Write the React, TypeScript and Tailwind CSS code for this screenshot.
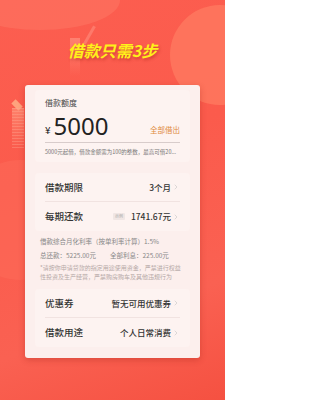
import { ChevronRight } from 'lucide-react'

const font = { fontFamily: '"Noto Sans CJK SC", "Noto Sans", sans-serif' }

function Row({ label, value, tag, last }: { label: string; value: string; tag?: string; last?: boolean }) {
  return (
    <div className={`mx-[10px] flex h-[29px] items-center ${last ? '' : 'border-b border-[#f1e3e1]'}`}>
      <span className="text-[9.5px] font-medium text-[#333]">{label}</span>
      <div className="ml-auto flex items-center">
        {tag && <span className="mr-[6px] rounded-[1px] bg-[#f0e6e4] px-[2px] text-[4px] leading-[7px] text-[#aaa]">{tag}</span>}
        <span className="text-[8.5px] font-medium text-[#333]">{value}</span>
        <ChevronRight className="ml-[1px] size-[8px] text-[#bbb]" strokeWidth={1.5} />
      </div>
    </div>
  )
}

export default function App() {
  return (
    <div style={font} className="relative h-[400px] w-[225px] overflow-hidden bg-[linear-gradient(160deg,#fc5e50_0%,#fb5b4c_40%,#fa6152_75%,#f55141_100%)]">
      {/* background decoration */}
      <div className="absolute -left-[40px] -top-[30px] h-[60px] w-[160px] rounded-[50%] bg-[#fd7463] opacity-60" />
      <div className="absolute -right-[45px] top-[5px] h-[100px] w-[100px] rounded-full bg-[#ff7d63] opacity-70" />
      <div className="absolute left-[-40px] top-[160px] h-[120px] w-[120px] rounded-full bg-[#fd6b5a] opacity-50" />
      <div className="absolute left-[70px] top-[38px] h-[38px] w-[10px] bg-[linear-gradient(180deg,#ff8a7a,#fc6a5b00)] opacity-80" />
      <div className="absolute left-[88px] top-[25px] h-[20px] w-[3px] rotate-[30deg] bg-[#ff9585] opacity-50" />
      <div className="absolute left-[12px] top-[102px] h-[6px] w-[10px] rotate-45 bg-[#ffb48a] opacity-80" />
      <div className="absolute left-[12px] top-[108px] h-[40px] w-[12px] bg-[repeating-linear-gradient(0deg,#ffb09a55_0px,#ffb09a55_1px,transparent_1px,transparent_3px),linear-gradient(180deg,#ff9a7e99,#fc6a5b00)]" />

      {/* title */}
      <div className="relative flex justify-center pt-[40px]">
        <span className="text-[16px] font-bold italic leading-[20px] text-[#fff01a] [text-shadow:1px_2px_3px_rgba(160,30,20,0.45)]">借款只需3步</span>
      </div>

      {/* card */}
      <div className="relative mx-[25px] mt-[25px] rounded-[3px] bg-[#fcefed] pb-[11px] pt-[5px] shadow-[0_2px_6px_rgba(150,30,20,0.3)]">
        <div className="mx-[10px] rounded-[4px] bg-[#fdf3f1] px-[10px] pb-[5px] pt-[7px]">
          <div className="text-[8px] leading-[11px] text-[#444]">借款额度</div>
          <div className="mt-[5px] flex items-end border-b border-[#d8cccb] pb-[3px]">
            <span className="mb-[3px] text-[10px] leading-[12px] text-[#222]">¥</span>
            <span className="ml-[3px] text-[24px] leading-[26px] text-[#222]" style={{ fontFamily: '"Noto Sans", sans-serif' }}>5000</span>
            <span className="mb-[4px] ml-auto text-[7.5px] leading-[10px] text-[#e08a3c]">全部借出</span>
          </div>
          <div className="mt-[4px] whitespace-nowrap text-[5.5px] leading-[10px] text-[#777]">5000元起借，借款金额需为100的整数，最高可借20...</div>
        </div>

        <div className="mx-[10px] mt-[11px] rounded-[4px] bg-[#fdf3f1]">
          <Row label="借款期限" value="3个月" />
          <Row label="每期还款" value="1741.67元" tag="示例" last />
        </div>

        <div className="mx-[15px] mt-[5px] text-[6.5px] leading-[10px] text-[#888]">
          <div>借款综合月化利率（按单利率计算）1.5%</div>
          <div className="mt-[4px] flex">
            <span className="w-[70px]">总还款：5225.00元</span>
            <span>全部利息：225.00元</span>
          </div>
          <div className="mt-[3px] text-[6px] leading-[9px] text-[#b5a8a6]">*请按你申请贷款的指定用途使用资金，严禁进行权益性投资及生产经营，严禁购房购车及其他违规行为</div>
        </div>

        <div className="mx-[10px] mt-[8px] rounded-[4px] bg-[#fdf3f1]">
          <Row label="优惠券" value="暂无可用优惠券" />
          <Row label="借款用途" value="个人日常消费" last />
        </div>
      </div>
    </div>
  )
}
